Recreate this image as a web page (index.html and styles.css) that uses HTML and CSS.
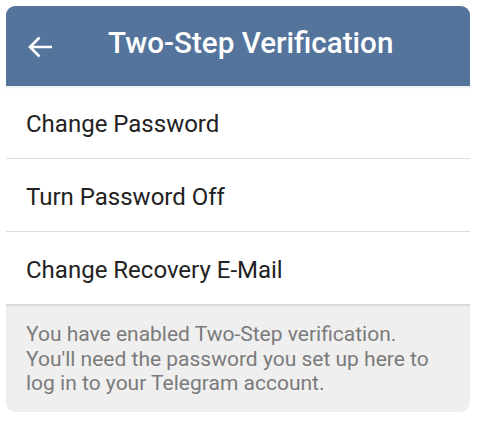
FILE: index.html
```html
<!DOCTYPE html>
<html>
<head>
<meta charset="utf-8">
<link rel="stylesheet" href="styles.css">
</head>
<body>
<div class="card">
  <header class="bar">
    <svg class="back" width="26" height="24" viewBox="0 0 26 24"><path d="M26 12H4M13.5 2.5L4 12l9.5 9.5" fill="none" stroke="#fff" stroke-width="2.6" stroke-linecap="butt" stroke-linejoin="miter"/></svg>
    <h1 class="title">Two-Step Verification</h1>
  </header>
  <div class="list">
    <div class="row">Change Password</div>
    <div class="row">Turn Password Off</div>
    <div class="row">Change Recovery E-Mail</div>
  </div>
  <div class="info">You have enabled Two-Step verification. You'll need the password you set up here to log in to your Telegram account.</div>
</div>
</body>
</html>
```
FILE: styles.css
```css
html, body { margin: 0; padding: 0; background: #fff; }
body { font-family: Roboto, "Noto Sans", sans-serif; }
.card {
  margin: 6px 10px 0 6px;
  width: 464px;
  border-radius: 9px;
  overflow: hidden;
  background: #fff;
}
.bar {
  height: 80px;
  background: #54749c;
  display: flex;
  align-items: center;
  padding-left: 20px;
  box-sizing: border-box;
}
.back { flex: none; margin-top: 2px; }
.title {
  margin: 0 0 6px 56px;
  color: #fff;
  font-size: 29.6px;
  font-weight: 500;
  letter-spacing: 0;
}
.list { box-shadow: inset 0 3px 3px -2px rgba(0,0,0,0.12); }
.row {
  height: 73px;
  box-sizing: border-box;
  padding-top: 4px;
  display: flex;
  align-items: center;
  padding-left: 20px;
  font-size: 24px;
  color: #222;
  border-bottom: 1px solid #dddddd;
}
.row:last-child { border-bottom: none; height: 72px; }
.info {
  background: #efefef;
  color: #7b7b7b;
  font-size: 21px;
  line-height: 24.5px;
  padding: 18px 24px 16px 20px;
  box-shadow: inset 0 3px 3px -2px rgba(0,0,0,0.15);
}
```
